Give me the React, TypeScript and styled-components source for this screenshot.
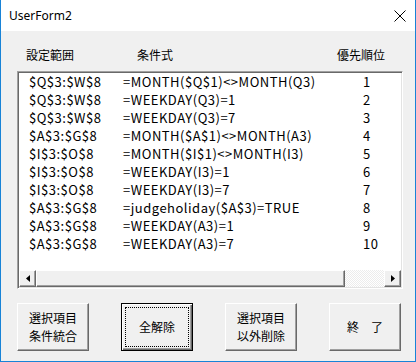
import React from "react";
import styled, { createGlobalStyle, css } from "styled-components";

const Global = createGlobalStyle`
  html, body { margin: 0; padding: 0; background: #ffffff; }
  #root { width: 416px; height: 362px; }
`;

const Window = styled.div`
  width: 416px;
  height: 362px;
  box-sizing: border-box;
  border: 1px solid #1883d7;
  border-top: none;
  display: flex;
  flex-direction: column;
  font-family: "Noto Sans CJK JP", sans-serif;
  color: #000;
`;

const TitleBar = styled.div`
  height: 31px;
  flex: none;
  background: #ffffff;
  display: flex;
  align-items: center;
  justify-content: space-between;
  padding: 0 9px 0 8px;
`;

const Title = styled.span`
  font-family: "Noto Sans", sans-serif;
  font-size: 12px;
  line-height: 16px;
  color: #000;
`;

const CloseIcon = styled.svg`
  width: 12px;
  height: 12px;
  display: block;
`;

const Body = styled.div`
  flex: 1;
  background: #f0f0f0;
  padding: 16px 12px 10px 16px;
  display: flex;
  flex-direction: column;
`;

const HeaderRow = styled.div`
  display: grid;
  grid-template-columns: 111px 200px 1fr;
  padding-left: 9px;
  height: 16px;
  font-size: 12px;
  line-height: 16px;
`;

const ListBox = styled.div`
  margin-top: 8px;
  height: 218px;
  box-sizing: border-box;
  background: #ffffff;
  border: 1px solid;
  border-color: #a0a0a0 #ffffff #ffffff #a0a0a0;
  box-shadow: inset 1px 1px 0 #696969, inset -1px -1px 0 #e3e3e3;
  padding: 1px;
  display: flex;
  flex-direction: column;
`;

const Row = styled.div`
  display: grid;
  grid-template-columns: 94px 240px 1fr;
  padding-left: 10px;
  height: 18px;
  font-size: 13px;
  letter-spacing: 0.5px;
  line-height: 18px;
  white-space: nowrap;
`;

const Spacer = styled.div`
  flex: 1;
`;

const raised = css`
  box-sizing: border-box;
  background: #f0f0f0;
  border: 1px solid;
  border-color: #ffffff #696969 #696969 #ffffff;
  box-shadow: inset -1px -1px 0 #a0a0a0;
`;

const ScrollBar = styled.div`
  height: 17px;
  display: flex;
  flex: none;
`;

const ArrowButton = styled.div`
  ${raised};
  width: 17px;
  height: 17px;
  display: flex;
  align-items: center;
  justify-content: center;
`;

const Thumb = styled.div`
  ${raised};
  width: 309px;
  height: 17px;
`;

const Track = styled.div`
  flex: 1;
  height: 17px;
  background-color: #ffffff;
  background-image: repeating-conic-gradient(#ececec 0 25%, #ffffff 0 50%);
  background-size: 2px 2px;
`;

const Arrow = styled.svg`
  width: 4px;
  height: 7px;
  display: block;
`;

const ButtonRow = styled.div`
  margin-top: 14px;
  display: flex;
  gap: 32px;
`;

const FormButton = styled.div<{ $default?: boolean }>`
  ${raised};
  position: relative;
  width: 72px;
  height: 48px;
  display: flex;
  flex-direction: column;
  align-items: center;
  justify-content: center;
  font-size: 12px;
  line-height: 18px;
  white-space: pre;
  ${(p) =>
    p.$default &&
    css`
      border: 1px solid #000;
      box-shadow: inset 1px 1px 0 #ffffff, inset -1px -1px 0 #696969, inset -2px -2px 0 #a0a0a0;
      &::after {
        content: "";
        position: absolute;
        inset: 3px;
        border: 1px dotted #000;
      }
    `}
`;

const rows: [string, string, string][] = [
  ["$Q$3:$W$8", "=MONTH($Q$1)<>MONTH(Q3)", "1"],
  ["$Q$3:$W$8", "=WEEKDAY(Q3)=1", "2"],
  ["$Q$3:$W$8", "=WEEKDAY(Q3)=7", "3"],
  ["$A$3:$G$8", "=MONTH($A$1)<>MONTH(A3)", "4"],
  ["$I$3:$O$8", "=MONTH($I$1)<>MONTH(I3)", "5"],
  ["$I$3:$O$8", "=WEEKDAY(I3)=1", "6"],
  ["$I$3:$O$8", "=WEEKDAY(I3)=7", "7"],
  ["$A$3:$G$8", "=judgeholiday($A$3)=TRUE", "8"],
  ["$A$3:$G$8", "=WEEKDAY(A3)=1", "9"],
  ["$A$3:$G$8", "=WEEKDAY(A3)=7", "10"],
];

export default function App() {
  return (
    <>
      <Global />
      <Window>
        <TitleBar>
          <Title>UserForm2</Title>
          <CloseIcon viewBox="0 0 12 12">
            <path d="M0.5 0.5 L11.5 11.5 M11.5 0.5 L0.5 11.5" stroke="#000" strokeWidth="1" fill="none" />
          </CloseIcon>
        </TitleBar>
        <Body>
          <HeaderRow>
            <span>設定範囲</span>
            <span>条件式</span>
            <span>優先順位</span>
          </HeaderRow>
          <ListBox>
            {rows.map((r, i) => (
              <Row key={i}>
                <span>{r[0]}</span>
                <span>{r[1]}</span>
                <span>{r[2]}</span>
              </Row>
            ))}
            <Spacer />
            <ScrollBar>
              <ArrowButton>
                <Arrow viewBox="0 0 4 7">
                  <path d="M4 0 L0 3.5 L4 7 Z" fill="#000" />
                </Arrow>
              </ArrowButton>
              <Thumb />
              <Track />
              <ArrowButton>
                <Arrow viewBox="0 0 4 7">
                  <path d="M0 0 L4 3.5 L0 7 Z" fill="#000" />
                </Arrow>
              </ArrowButton>
            </ScrollBar>
          </ListBox>
          <ButtonRow>
            <FormButton>{"選択項目\n条件統合"}</FormButton>
            <FormButton $default>全解除</FormButton>
            <FormButton>{"選択項目\n以外削除"}</FormButton>
            <FormButton>{"終　了"}</FormButton>
          </ButtonRow>
        </Body>
      </Window>
    </>
  );
}
